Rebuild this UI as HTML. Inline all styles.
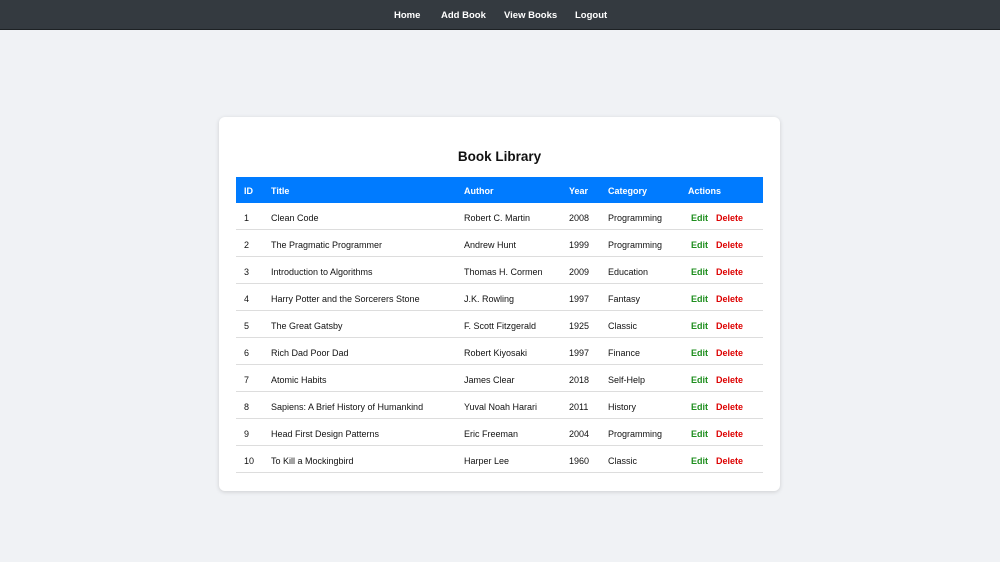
<!DOCTYPE html>
<html><head><meta charset="utf-8"><style>
*{margin:0;padding:0;box-sizing:border-box}
body{width:1000px;height:562px;background:#f0f2f5;font-family:"Liberation Sans",sans-serif;position:relative;overflow:hidden}
.nav{position:absolute;left:0;top:0;width:1000px;height:30px;background:#343a40;border-bottom:1px solid #1d2124}
.nav a{position:absolute;top:10px;color:#fff;font-weight:bold;font-size:9.5px;text-decoration:none}
.card{position:absolute;left:219px;top:117px;width:561px;height:374px;background:#fff;border-radius:6px;box-shadow:0 1px 4px rgba(0,0,0,.15)}
h2{position:absolute;left:0;width:100%;top:32px;text-align:center;font-size:13.5px;font-weight:bold;color:#111}
.hd{position:absolute;left:17px;top:60px;width:527px;height:26px;background:#007bff}
.hd span{position:absolute;top:9px;color:#fff;font-weight:bold;font-size:9px}
.row{position:absolute;left:17px;width:527px;height:27px;border-bottom:1px solid #ddd}
.row span{position:absolute;top:10px;font-size:9px;color:#111}
.row .e{color:#1e8e1e;font-weight:bold}
.row .d{color:#d00;font-weight:bold}
</style></head><body>
<div class="nav"><a style="left:394px">Home</a><a style="left:441px">Add Book</a><a style="left:504px">View Books</a><a style="left:575px">Logout</a></div>
<div class="card">
<h2>Book Library</h2>
<div class="hd"><span style="left:8px">ID</span><span style="left:35px">Title</span><span style="left:228px">Author</span><span style="left:333px">Year</span><span style="left:372px">Category</span><span style="left:452px">Actions</span></div>
<div class="row" style="top:86px"><span style="left:8px">1</span><span style="left:35px">Clean Code</span><span style="left:228px">Robert C. Martin</span><span style="left:333px">2008</span><span style="left:372px">Programming</span><span class="e" style="left:455px">Edit</span><span class="d" style="left:480px">Delete</span></div>
<div class="row" style="top:113px"><span style="left:8px">2</span><span style="left:35px">The Pragmatic Programmer</span><span style="left:228px">Andrew Hunt</span><span style="left:333px">1999</span><span style="left:372px">Programming</span><span class="e" style="left:455px">Edit</span><span class="d" style="left:480px">Delete</span></div>
<div class="row" style="top:140px"><span style="left:8px">3</span><span style="left:35px">Introduction to Algorithms</span><span style="left:228px">Thomas H. Cormen</span><span style="left:333px">2009</span><span style="left:372px">Education</span><span class="e" style="left:455px">Edit</span><span class="d" style="left:480px">Delete</span></div>
<div class="row" style="top:167px"><span style="left:8px">4</span><span style="left:35px">Harry Potter and the Sorcerers Stone</span><span style="left:228px">J.K. Rowling</span><span style="left:333px">1997</span><span style="left:372px">Fantasy</span><span class="e" style="left:455px">Edit</span><span class="d" style="left:480px">Delete</span></div>
<div class="row" style="top:194px"><span style="left:8px">5</span><span style="left:35px">The Great Gatsby</span><span style="left:228px">F. Scott Fitzgerald</span><span style="left:333px">1925</span><span style="left:372px">Classic</span><span class="e" style="left:455px">Edit</span><span class="d" style="left:480px">Delete</span></div>
<div class="row" style="top:221px"><span style="left:8px">6</span><span style="left:35px">Rich Dad Poor Dad</span><span style="left:228px">Robert Kiyosaki</span><span style="left:333px">1997</span><span style="left:372px">Finance</span><span class="e" style="left:455px">Edit</span><span class="d" style="left:480px">Delete</span></div>
<div class="row" style="top:248px"><span style="left:8px">7</span><span style="left:35px">Atomic Habits</span><span style="left:228px">James Clear</span><span style="left:333px">2018</span><span style="left:372px">Self-Help</span><span class="e" style="left:455px">Edit</span><span class="d" style="left:480px">Delete</span></div>
<div class="row" style="top:275px"><span style="left:8px">8</span><span style="left:35px">Sapiens: A Brief History of Humankind</span><span style="left:228px">Yuval Noah Harari</span><span style="left:333px">2011</span><span style="left:372px">History</span><span class="e" style="left:455px">Edit</span><span class="d" style="left:480px">Delete</span></div>
<div class="row" style="top:302px"><span style="left:8px">9</span><span style="left:35px">Head First Design Patterns</span><span style="left:228px">Eric Freeman</span><span style="left:333px">2004</span><span style="left:372px">Programming</span><span class="e" style="left:455px">Edit</span><span class="d" style="left:480px">Delete</span></div>
<div class="row" style="top:329px"><span style="left:8px">10</span><span style="left:35px">To Kill a Mockingbird</span><span style="left:228px">Harper Lee</span><span style="left:333px">1960</span><span style="left:372px">Classic</span><span class="e" style="left:455px">Edit</span><span class="d" style="left:480px">Delete</span></div>
</div>
</body></html>
